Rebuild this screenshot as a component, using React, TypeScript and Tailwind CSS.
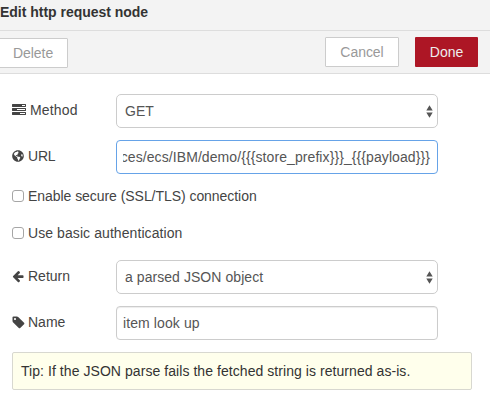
import React from "react";
import { FaGlobeAmericas } from "react-icons/fa";

const TASKS =
  "M1024 1408h640v-128h-640v128zm-384-512h1024v-128h-1024v128zm640-512h384v-128h-384v128zm512 832v256q0 26-19 45t-45 19h-1664q-26 0-45-19t-19-45v-256q0-26 19-45t45-19h1664q26 0 45 19t19 45zm0-512v256q0 26-19 45t-45 19h-1664q-26 0-45-19t-19-45v-256q0-26 19-45t45-19h1664q26 0 45 19t19 45zm0-512v256q0 26-19 45t-45 19h-1664q-26 0-45-19t-19-45v-256q0-26 19-45t45-19h1664q26 0 45 19t19 45z";
const ARROW =
  "M1664 896v128q0 53-32.5 90.5t-84.5 37.5h-704l293 294q38 36 38 90t-38 90l-75 76q-37 37-90 37-52 0-91-37l-651-652q-37-37-37-90 0-52 37-91l651-650q38-38 91-38 52 0 90 38l75 74q38 38 38 91t-38 91l-293 293h704q52 0 84.5 37.5t32.5 90.5z";
const TAG =
  "M576 448q0-53-37.5-90.5t-90.5-37.5-90.5 37.5-37.5 90.5 37.5 90.5 90.5 37.5 90.5-37.5 37.5-90.5zm1067 576q0 53-37 90l-491 492q-39 37-91 37-53 0-90-37l-715-716q-38-37-64.5-101t-26.5-117v-416q0-52 38-90t90-38h416q53 0 117 26.5t102 64.5l715 714q37 39 37 91z";

function Glyph({ d, box, className }: { d: string; box: string; className: string }) {
  return (
    <svg viewBox={box} fill="currentColor" className={className}>
      <path d={d} />
    </svg>
  );
}

function Row({ icon, label, children }: { icon: React.ReactNode; label: React.ReactNode; children: React.ReactNode }) {
  return (
    <div className="flex h-[34px] items-center">
      <div className="flex w-[104px] shrink-0 items-center pb-[2px]">
        {icon}
        {label}
      </div>
      {children}
    </div>
  );
}

function Select({ children }: { children: React.ReactNode }) {
  return (
    <div className="flex h-[34px] w-[322px] items-center justify-between rounded-[5px] border border-[#ccc] bg-white pr-[4px] pl-2 text-[#555]">
      {children}
      <svg viewBox="0 0 7 13" className="h-[13px] w-[7px]" fill="#555">
        <path d="M3.5 0.3 6.7 5.5H0.3zM3.5 12.7 0.3 7.5h6.4z" />
      </svg>
    </div>
  );
}

function Check({ children }: { children: React.ReactNode }) {
  return (
    <div className="flex h-5 items-center">
      <span className="h-3 w-3 rounded-[3px] border border-[#a6a6a6] bg-white" />
      <span className="ml-1">{children}</span>
    </div>
  );
}

export default function App() {
  return (
    <div className="h-[402px] w-[490px] overflow-hidden bg-white font-['Liberation_Sans',Arial,sans-serif] text-[14px] leading-5 whitespace-nowrap text-[#444]">
      <header className="h-[31px] border-b border-[#ddd] bg-[#f3f3f3] pt-[2px] font-bold text-[#333]">
        <span className="tracking-[-0.02px]">Edit http request node</span>
      </header>
      <div className="flex h-[43px] items-start border-b border-[#ddd] bg-[#f3f3f3] pt-[6px]">
        <button className="mt-px -ml-px h-[30px] w-[69px] rounded-[1px] border border-[#ccc] bg-white pb-px pl-[13px] text-left text-[#999]">
          <span className="tracking-[-0.05px]">Delete</span>
        </button>
        <button className="ml-[257px] h-[30px] w-[74px] rounded-[1px] border border-[#ccc] bg-white pb-px text-[#999]">
          <span className="tracking-[-0.05px]">Cancel</span>
        </button>
        <button className="ml-4 h-[30px] w-[63px] rounded-[1px] bg-[#ad1625] pb-px text-[#eee]">Done</button>
      </div>
      <main className="pt-5 pl-3">
        <Row
          icon={<Glyph d={TASKS} box="0 0 1792 1792" className="h-[14px] w-[14px]" />}
          label={<span className="ml-1 tracking-[0.15px]">Method</span>}
        >
          <Select><span>GET</span></Select>
        </Row>
        <div className="mt-3">
          <Row icon={<FaGlobeAmericas className="h-3 w-3" />} label={<span className="ml-1 tracking-[-0.2px]">URL</span>}>
            <div className="flex h-[34px] w-[322px] items-center rounded-[4px] border border-[#66a3e8] px-[6px] text-[#555]">
              <div className="flex w-full justify-end overflow-hidden pr-px">
                <span className="tracking-[0.085px]">{"ces/ecs/IBM/demo/{{{store_prefix}}}_{{{payload}}}"}</span>
              </div>
            </div>
          </Row>
        </div>
        <div className="mt-3">
          <Check><span className="tracking-[-0.05px]">Enable secure (SSL/TLS) connection</span></Check>
        </div>
        <div className="mt-[17px]">
          <Check><span className="tracking-[0.08px]">Use basic authentication</span></Check>
        </div>
        <div className="mt-[17px]">
          <Row
            icon={<Glyph d={ARROW} box="64 100 1664 1664" className="h-[13px] w-[12px]" />}
            label={<span className="ml-1">Return</span>}
          >
            <Select><span className="tracking-[0.06px]">a parsed JSON object</span></Select>
          </Row>
        </div>
        <div className="mt-3">
          <Row
            icon={<Glyph d={TAG} box="64 64 1664 1664" className="h-[13px] w-[13px]" />}
            label={<span className="ml-[3px]">Name</span>}
          >
            <div className="flex h-[34px] w-[322px] items-center rounded-[4px] border border-[#ccc] px-[6px] text-[#555] shadow-[inset_0_1px_1px_rgba(0,0,0,0.075)]">
              <span className="tracking-[0.1px]">item look up</span>
            </div>
          </Row>
        </div>
        <div className="mt-3 flex h-[38px] w-[460px] items-center rounded-[2px] border border-[#d8d8d0] bg-[#ffffec] px-2 text-[#333]">
          <span className="tracking-[0.06px]">Tip: If the JSON parse fails the fetched string is returned as-is.</span>
        </div>
      </main>
    </div>
  );
}
